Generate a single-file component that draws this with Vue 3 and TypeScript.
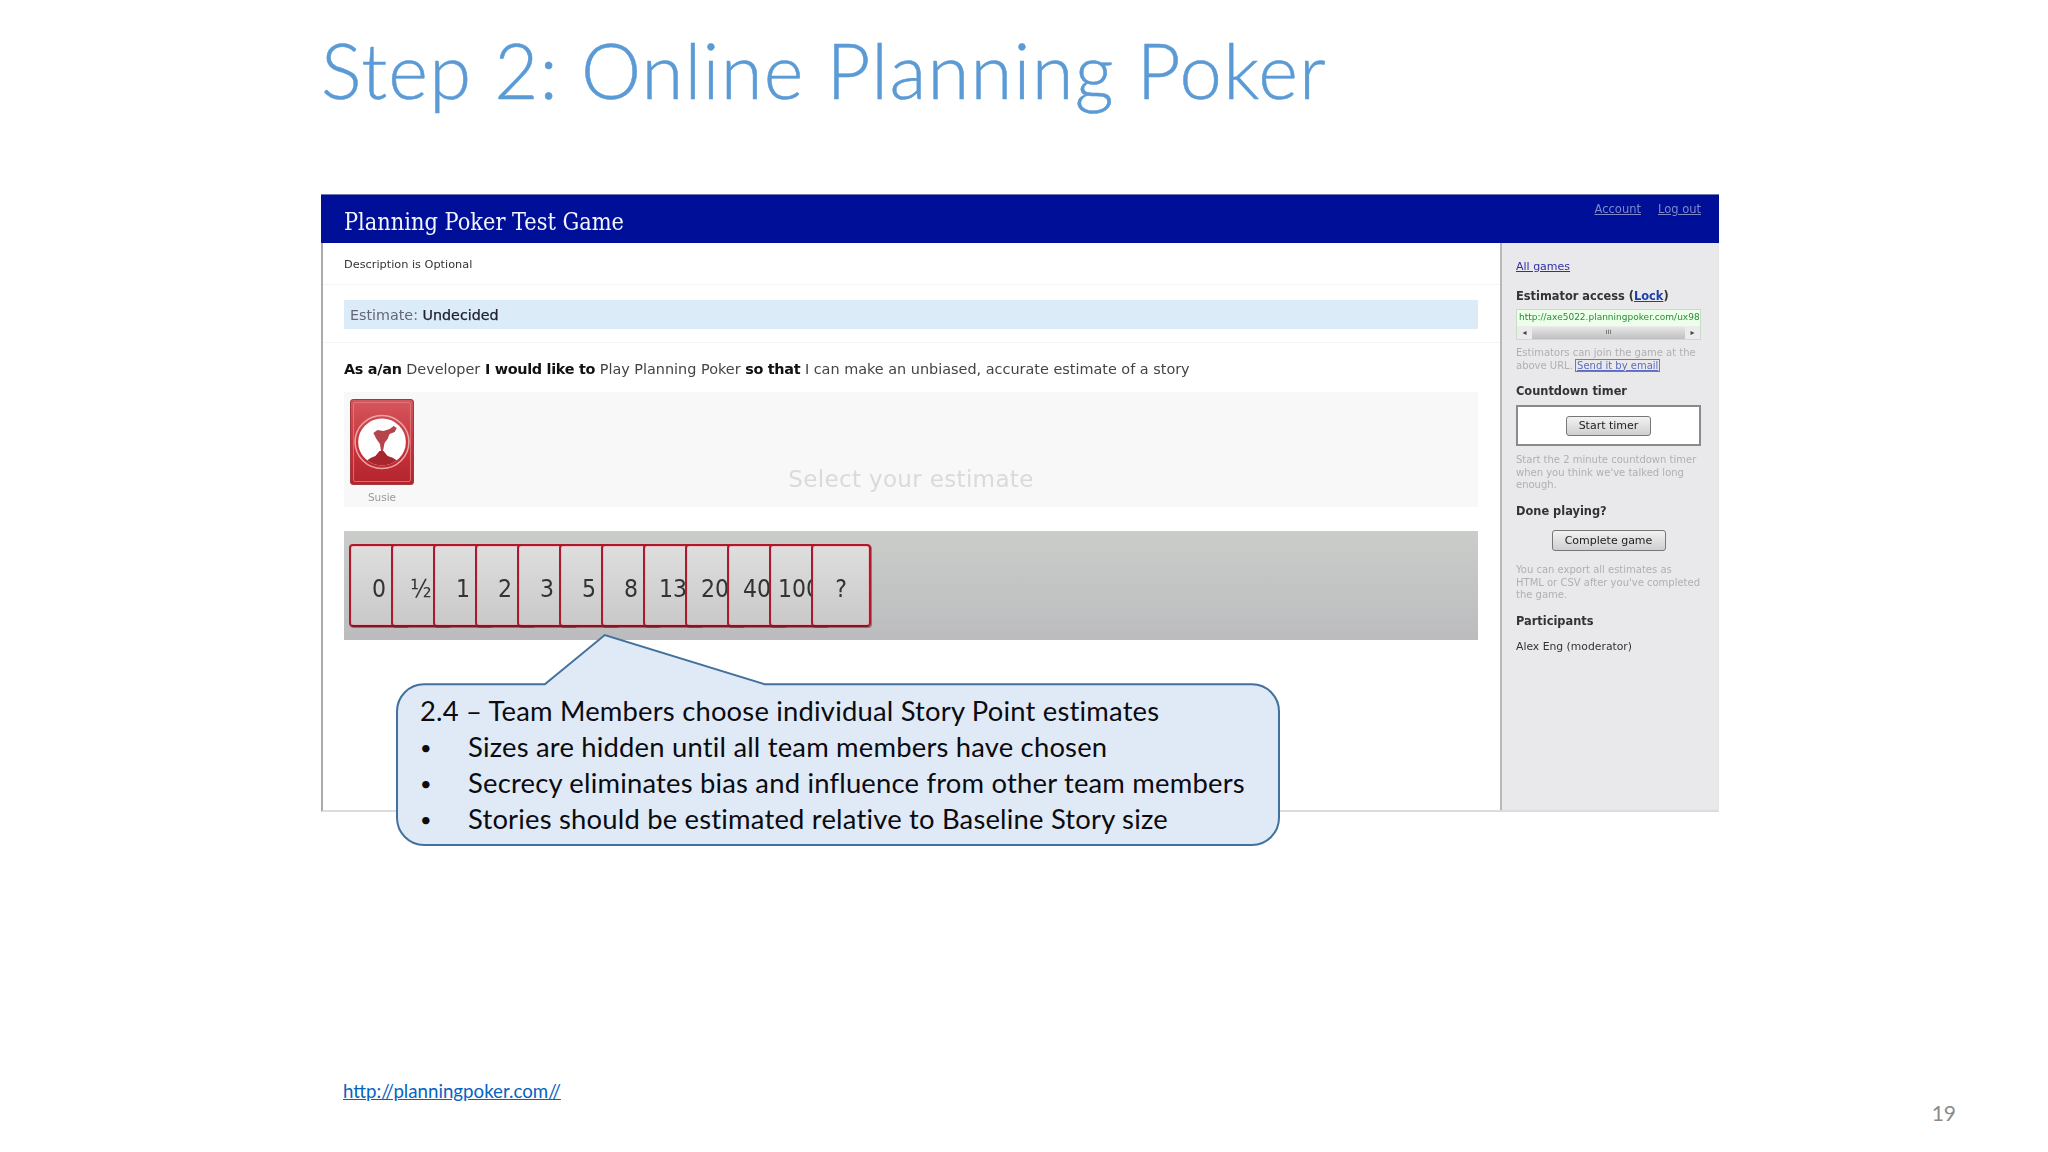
<script setup lang="ts">
const cards: string[] = ['0', '½', '1', '2', '3', '5', '8', '13', '20', '40', '100', '?']
const bullets: string[] = [
  'Sizes are hidden until all team members have chosen',
  'Secrecy eliminates bias and influence from other team members',
  'Stories should be estimated relative to Baseline Story size',
]
</script>

<template>
  <div class="slide">
    <h1 class="title">Step 2: Online Planning Poker</h1>
    <div class="stage">
      <div class="shot">
        <header class="bar">
          <span class="game">Planning Poker Test Game</span>
          <nav class="nav"><a>Account</a><a>Log out</a></nav>
        </header>
        <div class="body">
          <main class="main">
            <div class="desc">Description is Optional</div>
            <div class="est-wrap">
              <div class="est"><span class="est-l">Estimate:</span> <span class="est-v">Undecided</span></div>
            </div>
            <p class="story"><b>As a/an</b> Developer <b>I would like to</b> Play Planning Poker <b>so that</b> I can make an unbiased, accurate estimate of a story</p>
            <div class="table">
              <div class="player">
                <svg class="deck" viewBox="0 0 63 86" preserveAspectRatio="none">
                  <defs>
                    <linearGradient id="deckfill" x1="0" y1="0" x2="0" y2="1">
                      <stop offset="0" stop-color="#d4585e" />
                      <stop offset="0.55" stop-color="#c8333a" />
                      <stop offset="1" stop-color="#b3242c" />
                    </linearGradient>
                    <clipPath id="disc"><circle cx="31.5" cy="43" r="23.5" /></clipPath>
                  </defs>
                  <rect x="0.5" y="0.5" width="62" height="85" rx="3" fill="url(#deckfill)" stroke="#a03a40" />
                  <rect x="3.5" y="3.5" width="56" height="79" rx="1.5" fill="none" stroke="#de7f83" stroke-width="0.8" />
                  <circle cx="31.5" cy="43" r="26.5" fill="none" stroke="#e8a6a8" stroke-width="1.5" />
                  <circle cx="31.5" cy="43" r="23.5" fill="#fff" />
                  <g clip-path="url(#disc)">
                    <path d="M23 34 L27 31 L33 32 L39 30 L43 27 L46 29 L44 33 L39 35 L37 40 L34 44 L32.5 52 L30.5 52 L29.5 45 L26 40 Z" fill="#b5444c" />
                    <path d="M16 62 Q21 58 25 57 L29 52 L33 52 L37 57 Q42 58 47 62 L47 70 L16 70 Z" fill="#a8262e" />
                  </g>
                </svg>
                <span class="susie">Susie</span>
              </div>
              <div class="select">Select your estimate</div>
            </div>
            <div class="hand">
              <div v-for="c in cards" :key="c" class="card">{{ c }}</div>
            </div>
          </main>
          <aside class="side">
            <a class="all">All games</a>
            <h4 class="h first">Estimator access (<a>Lock</a>)</h4>
            <div class="url">
              <div class="url-text">http://axe5022.planningpoker.com/ux98</div>
              <div class="scroll">
                <span class="arrow">◂</span>
                <span class="thumb"><i>III</i></span>
                <span class="arrow">▸</span>
              </div>
            </div>
            <p class="help">Estimators can join the game at the<br />above URL. <a class="send">Send it by email</a></p>
            <h4 class="h">Countdown timer</h4>
            <div class="timer"><button class="btn">Start timer</button></div>
            <p class="help m8">Start the 2 minute countdown timer<br />when you think we've talked long<br />enough.</p>
            <h4 class="h m11">Done playing?</h4>
            <div class="complete"><button class="btn wide">Complete game</button></div>
            <p class="help m13">You can export all estimates as<br />HTML or CSV after you've completed<br />the game.</p>
            <h4 class="h m12">Participants</h4>
            <div class="alex">Alex Eng (moderator)</div>
          </aside>
        </div>
      </div>
      <div class="callout">
        <svg class="bubble" viewBox="0 0 885 212" preserveAspectRatio="none">
          <path d="M28 51 H149 L209 2 L369 51 H857 A27 27 0 0 1 884 78 V184 A27 27 0 0 1 857 211 H28 A27 27 0 0 1 1 184 V78 A27 27 0 0 1 28 51 Z" fill="#dfeaf6" stroke="#41719c" stroke-width="2" />
        </svg>
        <div class="c-text">
          <div>2.4 – Team Members choose individual Story Point estimates</div>
          <div v-for="b in bullets" :key="b" class="c-li"><span class="dot">•</span><span>{{ b }}</span></div>
        </div>
      </div>
    </div>
    <footer class="foot">
      <a class="link">http://planningpoker.com//</a>
      <span class="num">19</span>
    </footer>
  </div>
</template>

<style>
html, body { margin: 0; background: #fff; }
</style>

<style scoped>
.slide {
  width: 2048px; height: 1152px; overflow: hidden; background: #fff;
  padding-left: 321px; box-sizing: border-box; font-family: Lato, "Open Sans", sans-serif;
  display: flex; flex-direction: column;
}
.title {
  margin: 0; height: 194px; box-sizing: border-box; padding-top: 24px;
  font-weight: 300; font-size: 76px; line-height: 92px; letter-spacing: 1.25px; color: #5b9bd5; white-space: nowrap;
  -webkit-text-stroke: 0.5px #5b9bd5;
}
.stage { position: relative; width: 1398px; height: 618px; }
.shot {
  height: 618px; box-sizing: border-box; display: flex; flex-direction: column;
  border-left: 2px solid #aaa; border-bottom: 2px solid #dcdcdc; border-right: 1px solid #e6e6e6;
  font-family: "DejaVu Sans", sans-serif; filter: blur(0.7px); color: #222;
}
.bar {
  height: 49px; background: #000f98; border-top: 1px solid #6e78ac; box-sizing: border-box;
  display: flex; justify-content: space-between; margin-left: -2px; margin-right: -1px;
}
.game { font-family: "DejaVu Serif Condensed", "Liberation Serif", serif; font-size: 23.3px; color: #f2f4ff; padding: 13px 0 0 23px; line-height: 28px; white-space: nowrap; }
.nav { display: flex; gap: 17px; padding: 6px 18px 0 0; font-size: 11.5px; color: #8088c8; line-height: 16px; }
.nav a { text-decoration: underline; }
.body { flex: 1; display: flex; min-height: 0; }
.main { flex: 1; min-width: 0; background: #fff; }
.desc { height: 42px; line-height: 43px; padding-left: 21px; font-size: 11.3px; color: #333; border-bottom: 1px solid #f4f4f4; box-sizing: border-box; }
.est-wrap { padding: 15px 22px 13px 21px; border-bottom: 1px solid #f4f4f4; }
.est { height: 29px; line-height: 30px; padding-left: 6px; background: #dcebf8; font-size: 14.3px; }
.est-l { color: #667; }
.est-v { color: #223; -webkit-text-stroke: 0.25px #223; }
.story { margin: 0; padding: 14px 0 11px 21px; line-height: 24px; font-size: 14.42px; color: #444; white-space: nowrap; }
.story b { color: #111; letter-spacing: -0.3px; }
.table { margin: 0 22px 0 21px; height: 115px; background: #f8f8f9; display: flex; padding: 7px 0 0 6px; box-sizing: border-box; }
.player { width: 64px; display: flex; flex-direction: column; align-items: center; }
.deck { width: 64px; height: 86px; display: block; flex: none; }
.susie { flex: none; font-size: 10.5px; color: #999; line-height: 24px; }
.select { flex: 1; padding-right: 70px; text-align: center; font-size: 23.1px; color: #dadada; margin-top: 65px; line-height: 30px; letter-spacing: 0.3px; }
.hand {
  margin: 24px 22px 0 21px; height: 109px; padding: 13px 0 0 5px; box-sizing: border-box;
  background: linear-gradient(#cacdca, #bcbcbe); display: flex;
}
.card {
  flex: none; width: 60px; height: 83px; box-sizing: border-box; margin-right: -18px;
  border: 2px solid #aa1a2c; border-bottom-color: #7d1826; border-radius: 4px; background: linear-gradient(#dedede, #c9c9c9);
  box-shadow: 1px 1px 0 rgba(110, 10, 30, 0.45), inset 0 0 0 1px rgba(255, 150, 160, 0.45);
  display: flex; align-items: center; justify-content: center; padding-top: 5px;
  font-family: "DejaVu Sans Condensed", "DejaVu Sans", sans-serif; font-size: 24.5px; color: #333; white-space: nowrap;
}
.side {
  width: 218px; flex: none; box-sizing: border-box; background: #e9e9eb; border-left: 2px solid #b8b8b8;
  padding: 15px 17px 0 14px; font-size: 10.5px; display: flex; flex-direction: column;
}
.all { color: #2f2fa8; text-decoration: underline; font-size: 11px; line-height: 18px; }
.h { margin: 11px 0 0; font-size: 11.4px; line-height: 16px; font-weight: 700; color: #333; }
.h a { color: #1f3fa8; text-decoration: underline; }
.h.first { margin-top: 12px; }
.h.m11 { margin-top: 11.5px; }
.h.m12 { margin-top: 11.5px; }
.url { margin-top: 5px; border: 1px solid #c8dcc8; height: 31px; box-sizing: border-box; display: flex; flex-direction: column; }
.url-text { height: 16px; background: #ecffe8; color: #2c8a3c; font-size: 9px; line-height: 15px; white-space: nowrap; padding-left: 2px; }
.scroll { flex: 1; display: flex; align-items: center; background: #ececec; font-size: 8px; color: #444; }
.arrow { width: 15px; text-align: center; }
.thumb { flex: 1; height: 12px; line-height: 10px; text-align: center; background: linear-gradient(#e6e6e6, #bfbfbf); }
.thumb i { font-style: normal; font-size: 6px; }
.help { margin: 7px 0 0; font-size: 10px; line-height: 12.5px; color: #b0b0b0; white-space: nowrap; }
.help.m8 { margin-top: 8px; }
.help.m13 { margin-top: 13px; }
.send { color: #5c6cc0; text-decoration: underline; outline: 1px solid #6a7ab8; padding: 0 1px; }
.timer { margin-top: 6px; height: 41px; box-sizing: border-box; border: 2px solid #8a8a8a; background: #fff; display: flex; align-items: center; justify-content: center; }
.btn {
  font-family: "DejaVu Sans", sans-serif; font-size: 11px; width: 85px; height: 20px; padding: 0; box-sizing: border-box;
  border: 1px solid #777; border-radius: 3px; background: linear-gradient(#f2f2f2, #cfcfcf); color: #222;
}
.btn.wide { width: 114px; height: 21px; }
.complete { margin-top: 11px; display: flex; justify-content: center; }
.alex { margin-top: 10px; font-size: 10.8px; line-height: 16px; color: #333; }
.callout { position: absolute; left: 75px; top: 439px; width: 884px; height: 213px; }
.bubble { position: absolute; inset: 0; width: 100%; height: 100%; display: block; }
.c-text { position: relative; padding: 60px 0 0 24px; font-size: 27.4px; line-height: 36px; letter-spacing: 0.2px; color: #0b0b10; white-space: nowrap; }
.c-li { display: flex; }
.dot { width: 48px; font-size: 20px; }
.foot { flex: 1; position: relative; display: flex; }
.link { margin: 267px 0 0 22px; font-size: 18.7px; line-height: 24px; height: 24px; color: #0563c1; text-decoration: underline; }
.num { margin: 288px 92px 0 auto; font-size: 21px; line-height: 26px; height: 26px; color: #8b8b8b; }
</style>
